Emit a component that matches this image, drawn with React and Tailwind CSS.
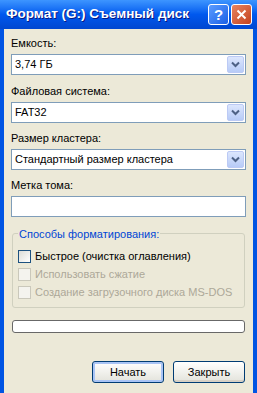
import React from 'react'

const font = { fontFamily: '"Liberation Sans", Arial, sans-serif' }

function Chevron() {
  return (
    <svg width="9" height="7" viewBox="0 0 9 7">
      <path d="M1 1.5 L4.5 5 L8 1.5" fill="none" stroke="#4d6185" strokeWidth="2" />
    </svg>
  )
}

function Combo({ value }) {
  return (
    <div className="flex h-[21px] items-center border border-[#7f9db9] bg-white pl-[3px] pr-[1px]">
      <span className="flex-1 text-[11px] text-black">{value}</span>
      <div className="flex h-[17px] w-[17px] items-center justify-center rounded-[2px] border border-[#bccaf5] bg-gradient-to-b from-[#dce6fd] to-[#b7cbf7]">
        <Chevron />
      </div>
    </div>
  )
}

function Label({ children }) {
  return <div className="mb-[4px] text-[11px] leading-[13px] text-black">{children}</div>
}

function Check({ label, disabled }) {
  return (
    <div className="flex h-[18px] items-center gap-[4px]">
      <div
        className={
          disabled
            ? 'h-[13px] w-[13px] border border-[#cac8bb] bg-[#f4f3ee]'
            : 'h-[13px] w-[13px] border border-[#1c5180] bg-gradient-to-br from-[#dcdcd7] to-white'
        }
      />
      <span className={disabled ? 'text-[11px] text-[#aca899]' : 'text-[11px] text-black'}>{label}</span>
    </div>
  )
}

function Button({ children, primary }) {
  return (
    <div
      className={
        'flex h-[22px] w-[72px] items-center justify-center rounded-[3px] border border-[#003c74] bg-gradient-to-b from-white to-[#e3e3db] text-[11px] text-black ' +
        (primary ? 'shadow-[inset_0_0_0_2px_#a9c4f5]' : 'shadow-[inset_0_-2px_0_#d6d0c5]')
      }
    >
      {children}
    </div>
  )
}

export default function App() {
  return (
    <div className="h-[393px] w-[257px] overflow-hidden bg-[#0054e3]" style={font}>
      {/* title bar */}
      <div className="flex h-[29px] items-center bg-gradient-to-b from-[#3d95ff] via-[#0058ee] to-[#0047d0] pl-[6px] pr-[5px]">
        <span className="flex-1 text-[13.5px] font-bold text-white [text-shadow:1px_1px_0_#0a1883]">
          Формат (G:) Съемный диск
        </span>
        <div className="flex gap-[2px]">
          <div className="flex h-[21px] w-[21px] items-center justify-center rounded-[3px] border border-white bg-gradient-to-br from-[#5b9cff] to-[#1a5fe6] text-[15px] font-bold leading-none text-white">
            ?
          </div>
          <div className="flex h-[21px] w-[21px] items-center justify-center rounded-[3px] border border-white bg-gradient-to-br from-[#e8845f] to-[#c3401c]">
            <svg width="11" height="11" viewBox="0 0 11 11">
              <path d="M1.5 1.5 L9.5 9.5 M9.5 1.5 L1.5 9.5" stroke="white" strokeWidth="2" />
            </svg>
          </div>
        </div>
      </div>

      {/* body */}
      <div className="mx-[4px] flex h-[364px] flex-col bg-[#ece9d8] px-[7px] pt-[8px]">
        <Label>Емкость:</Label>
        <Combo value="3,74 ГБ" />
        <div className="mt-[10px]" />
        <Label>Файловая система:</Label>
        <Combo value="FAT32" />
        <div className="mt-[9px]" />
        <Label>Размер кластера:</Label>
        <Combo value="Стандартный размер кластера" />
        <div className="mt-[9px]" />
        <Label>Метка тома:</Label>
        <div className="h-[21px] border border-[#7f9db9] bg-white" />

        <div className="relative mt-[16px] ml-[1px] mr-[1px] h-[75px] rounded-[3px] border border-[#d0d0bf] px-[5px] pt-[13px]">
          <span className="absolute -top-[8px] left-[5px] bg-[#ece9d8] px-[1px] text-[11px] text-[#0046d5]">
            Способы форматирования:
          </span>
          <Check label="Быстрое (очистка оглавления)" />
          <Check label="Использовать сжатие" disabled />
          <Check label="Создание загрузочного диска MS-DOS" disabled />
        </div>

        <div className="mt-[12px] ml-[1px] mr-[1px] h-[13px] rounded-[3px] border border-[#686868] bg-white" />

        <div className="mt-[28px] flex justify-end gap-[9px] pr-[1px]">
          <Button primary>Начать</Button>
          <Button>Закрыть</Button>
        </div>
      </div>
    </div>
  )
}
